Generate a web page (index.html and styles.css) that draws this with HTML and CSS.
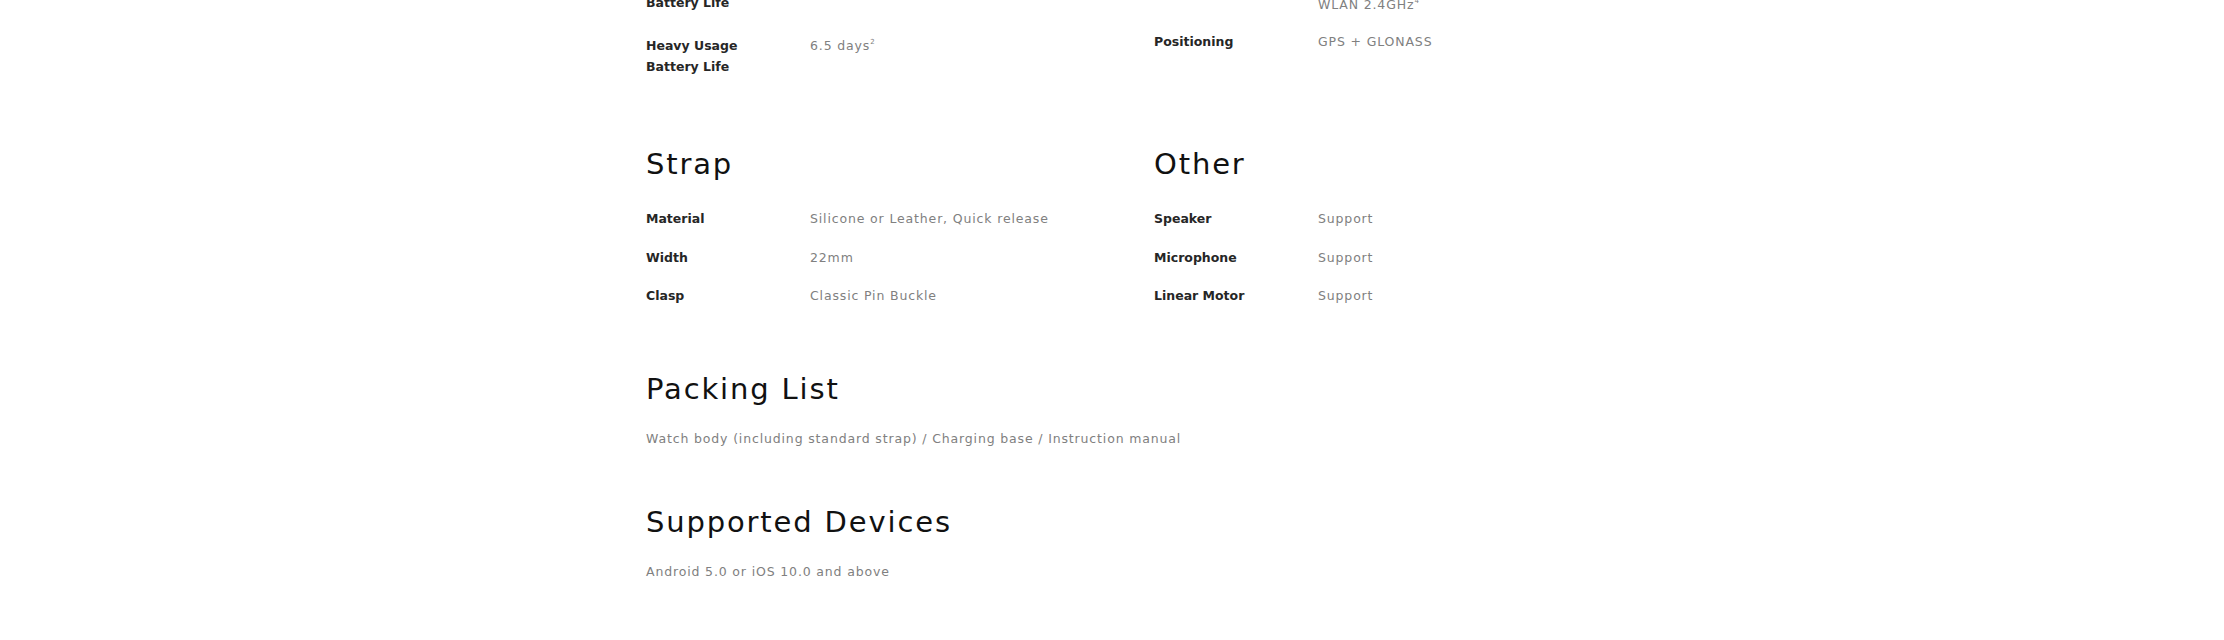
FILE: index.html
```html
<!DOCTYPE html>
<html lang="en">
<head>
<meta charset="utf-8">
<title>Specifications</title>
<link rel="stylesheet" href="styles.css">
</head>
<body>
<main class="specs">
  <section class="spec-group spec-group--battery">
    <div class="spec-col">
      <div class="spec-row spec-row--loose">
        <div class="spec-label">Typical Usage<br>Battery Life</div>
        <div class="spec-value">14 days<sup>1</sup></div>
      </div>
      <div class="spec-row">
        <div class="spec-label">Heavy Usage<br>Battery Life</div>
        <div class="spec-value">6.5 days<sup>2</sup></div>
      </div>
    </div>
    <div class="spec-col spec-col--shift">
      <div class="spec-row spec-row--tight">
        <div class="spec-label">Connectivity</div>
        <div class="spec-value">Bluetooth 4.2 BLE<br>WLAN 2.4GHz<sup>4</sup></div>
      </div>
      <div class="spec-row">
        <div class="spec-label">Positioning</div>
        <div class="spec-value">GPS + GLONASS</div>
      </div>
    </div>
  </section>

  <section class="spec-group">
    <div class="spec-col">
      <h2 class="spec-title">Strap</h2>
      <div class="spec-row">
        <div class="spec-label">Material</div>
        <div class="spec-value">Silicone or Leather, Quick release</div>
      </div>
      <div class="spec-row">
        <div class="spec-label">Width</div>
        <div class="spec-value">22mm</div>
      </div>
      <div class="spec-row">
        <div class="spec-label">Clasp</div>
        <div class="spec-value">Classic Pin Buckle</div>
      </div>
    </div>
    <div class="spec-col">
      <h2 class="spec-title">Other</h2>
      <div class="spec-row">
        <div class="spec-label">Speaker</div>
        <div class="spec-value">Support</div>
      </div>
      <div class="spec-row">
        <div class="spec-label">Microphone</div>
        <div class="spec-value">Support</div>
      </div>
      <div class="spec-row">
        <div class="spec-label">Linear Motor</div>
        <div class="spec-value">Support</div>
      </div>
    </div>
  </section>

  <section class="spec-block">
    <h2 class="spec-title spec-title--block">Packing List</h2>
    <p class="spec-text">Watch body (including standard strap) / Charging base / Instruction manual</p>
  </section>

  <section class="spec-block">
    <h2 class="spec-title spec-title--block">Supported Devices</h2>
    <p class="spec-text">Android 5.0 or iOS 10.0 and above</p>
  </section>
</main>
</body>
</html>
```

FILE: styles.css
```css
html, body {
  margin: 0;
  padding: 0;
  background: #ffffff;
}

body {
  font-family: "DejaVu Sans", "Liberation Sans", sans-serif;
  font-size: 12.5px;
  line-height: 21px;
  color: #222222;
}

.specs {
  width: 932px;
  margin: -29px auto 0;
}

.spec-group {
  display: grid;
  grid-template-columns: 508px 1fr;
  align-items: start;
  margin-bottom: 64.5px;
}

.spec-group--battery {
  margin-bottom: 69.5px;
}

.spec-col {
  display: flex;
  flex-direction: column;
  gap: 17.5px;
}

.spec-col--shift {
  padding-top: 2px;
}

.spec-row {
  display: flex;
  align-items: flex-start;
}

.spec-row--loose {
  margin-bottom: 4px;
}

.spec-row--tight {
  margin-bottom: -1.5px;
}

.spec-label {
  flex: none;
  width: 164px;
  font-weight: bold;
  color: #262626;
}

.spec-value {
  color: #808080;
  letter-spacing: 0.85px;
}

.spec-value sup {
  font-size: 7px;
  line-height: 0;
  vertical-align: 6px;
  letter-spacing: 0;
}

.spec-title {
  margin: 0 0 8.7px;
  font-size: 29px;
  line-height: 36px;
  font-weight: normal;
  letter-spacing: 1.85px;
  color: #111111;
}

.spec-title--block {
  margin-bottom: 21px;
}

.spec-block {
  margin-bottom: 55.3px;
}

.spec-text {
  margin: 0;
  color: #808080;
  letter-spacing: 0.85px;
}
```
